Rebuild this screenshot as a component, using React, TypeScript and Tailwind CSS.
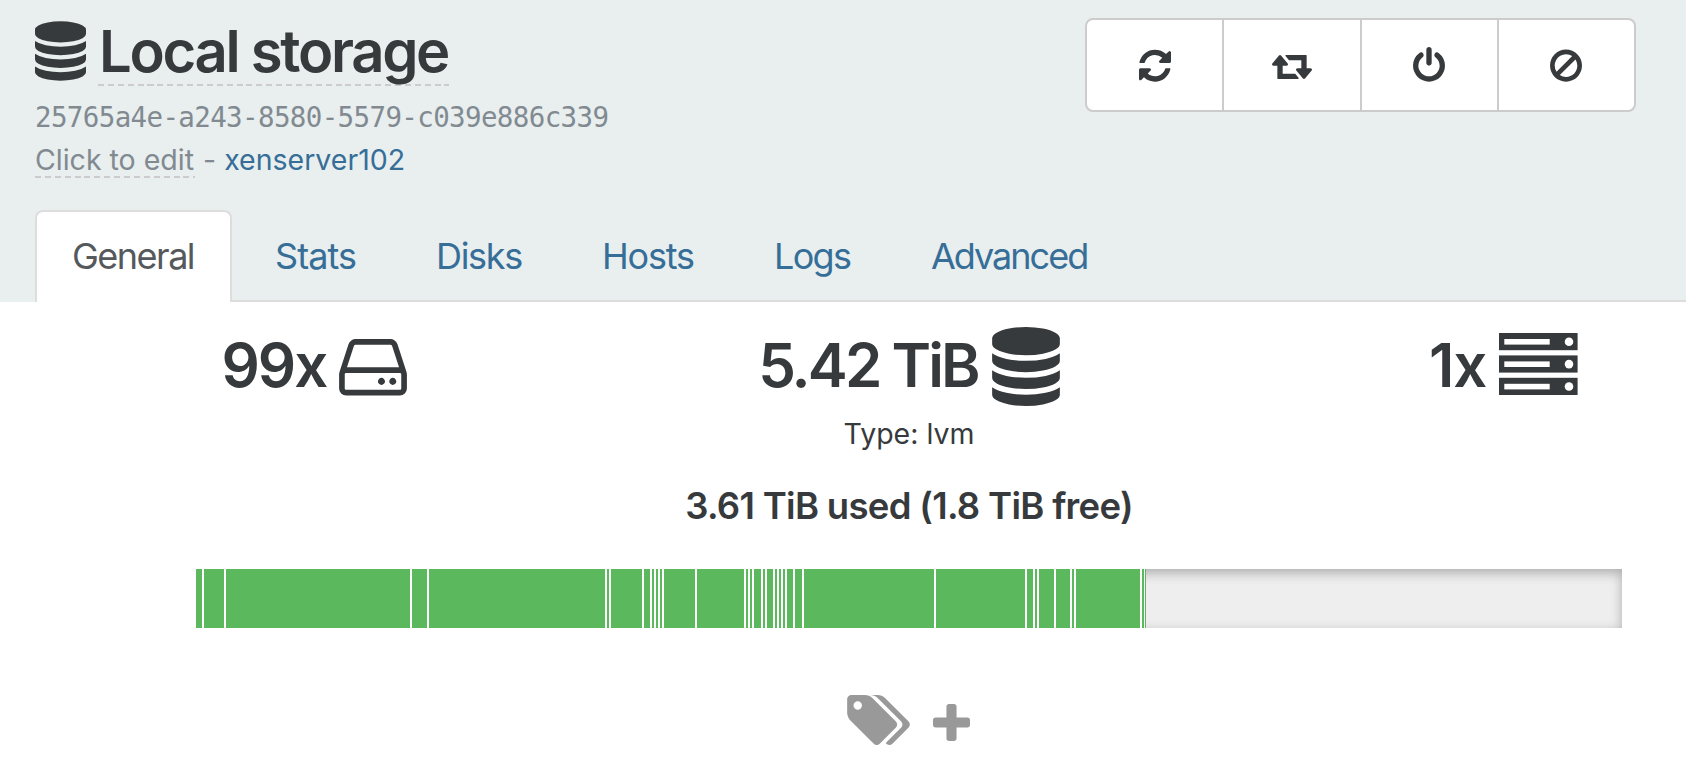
import type { ReactNode } from 'react';

interface IconProps {
  className?: string;
}

function DatabaseIcon({ className }: IconProps) {
  return (
    <svg viewBox="0 0 1536 1792" fill="currentColor" className={className}>
      <path d="M768 768q237 0 443-43t325-127v170q0 69-103 128t-280 93.5-385 34.5-385-34.5-280-93.5-103-128v-170q119 84 325 127t443 43zm0 768q237 0 443-43t325-127v170q0 69-103 128t-280 93.5-385 34.5-385-34.5-280-93.5-103-128v-170q119 84 325 127t443 43zm0-384q237 0 443-43t325-127v170q0 69-103 128t-280 93.5-385 34.5-385-34.5-280-93.5-103-128v-170q119 84 325 127t443 43zm0-1152q208 0 385 34.5t280 93.5 103 128v128q0 69-103 128t-280 93.5-385 34.5-385-34.5-280-93.5-103-128v-128q0-69 103-128t280-93.5 385-34.5z" />
    </svg>
  );
}

function RefreshIcon({ className }: IconProps) {
  return (
    <svg viewBox="128 0 1536 1792" fill="currentColor" className={className}>
      <path d="M1639 1056q0 5-1 7-64 268-268 434.5t-478 166.5q-146 0-282.5-55t-243.5-157l-129 129q-19 19-45 19t-45-19-19-45v-448q0-26 19-45t45-19h448q26 0 45 19t19 45-19 45l-137 137q71 66 161 102t187 36q134 0 250-65t186-179q11-17 53-117 8-23 30-23h192q13 0 22.5 9.5t9.5 22.5zm25-800v448q0 26-19 45t-45 19h-448q-26 0-45-19t-19-45 19-45l138-138q-148-137-349-137-134 0-250 65t-186 179q-11 17-53 117-8 23-30 23h-199q-13 0-22.5-9.5t-9.5-22.5v-7q65-268 270-434.5t480-166.5q146 0 284 55.5t245 156.5l130-129q19-19 45-19t45 19 19 45z" />
    </svg>
  );
}

function RetweetIcon({ className }: IconProps) {
  return (
    <svg viewBox="-64 64 1920 1792" fill="currentColor" className={className}>
      <path d="M1216 1568q0 13-9.5 22.5t-22.5 9.5h-960q-8 0-13.5-2t-9-7-5.5-8-3-11.5-1-11.5v-600h-192q-26 0-45-19t-19-45q0-24 15-41l320-384q19-22 49-22t49 22l320 384q15 17 15 41 0 26-19 45t-45 19h-192v384h576q16 0 25 11l160 192q7 10 7 21zm640-416q0 24-15 41l-320 384q-20 23-49 23t-49-23l-320-384q-15-17-15-41 0-26 19-45t45-19h192v-384h-576q-16 0-25-12l-160-192q-7-9-7-20 0-13 9.5-22.5t22.5-9.5h960q8 0 13.5 2t9 7 5.5 8 3 11.5 1 11.5v600h192q26 0 45 19t19 45z" />
    </svg>
  );
}

function PowerIcon({ className }: IconProps) {
  return (
    <svg viewBox="128 0 1536 1792" fill="currentColor" className={className}>
      <path d="M1664 896q0 156-61 298t-164 245-245 164-298 61-298-61-245-164-164-245-61-298q0-182 80.5-343t226.5-270q43-32 95.5-25t83.5 50q32 42 24.5 94.5t-49.5 84.5q-98 74-151.5 181t-53.5 228q0 104 40.5 198.5t109.5 163.5 163.5 109.5 198.5 40.5 198.5-40.5 163.5-109.5 109.5-163.5 40.5-198.5q0-121-53.5-228t-151.5-181q-42-32-49.5-84.5t24.5-94.5q31-43 84-50t95 25q146 109 226.5 270t80.5 343zm-640-768v640q0 52-38 90t-90 38-90-38-38-90v-640q0-52 38-90t90-38 90 38 38 90z" />
    </svg>
  );
}

function BanIcon({ className }: IconProps) {
  return (
    <svg viewBox="128 0 1536 1792" fill="currentColor" className={className}>
      <path d="M1440 893q0-161-87-295l-754 753q137 89 297 89 111 0 211.5-43.5t173.5-116.5 116-174.5 43-212.5zm-999 299l755-754q-135-91-300-91-148 0-273 73t-198 199-73 274q0 162 89 299zm1223-299q0 157-61 300t-163.5 246-245 164-298.5 61-298.5-61-245-164-163.5-246-61-300 61-299.5 163.5-245.5 245-164 298.5-61 298.5 61 245 164 163.5 245.5 61 299.5z" />
    </svg>
  );
}

function HddIcon({ className }: IconProps) {
  return (
    <svg viewBox="128 256 1536 1280" fill="currentColor" className={className}>
      <path d="M1168 1216q0 33-23.5 56.5t-56.5 23.5-56.5-23.5-23.5-56.5 23.5-56.5 56.5-23.5 56.5 23.5 23.5 56.5zm256 0q0 33-23.5 56.5t-56.5 23.5-56.5-23.5-23.5-56.5 23.5-56.5 56.5-23.5 56.5 23.5 23.5 56.5zm112 160v-320q0-13-9.5-22.5t-22.5-9.5h-1216q-13 0-22.5 9.5t-9.5 22.5v320q0 13 9.5 22.5t22.5 9.5h1216q13 0 22.5-9.5t9.5-22.5zm-1230-480h1180l-157-482q-4-13-16-21.5t-26-8.5h-782q-14 0-26 8.5t-16 21.5zm1358 160v320q0 66-47 113t-113 47h-1216q-66 0-113-47t-47-113v-320q0-25 16-75l197-606q17-53 63-86t101-33h782q55 0 101 33t63 86l197 606q16 50 16 75z" />
    </svg>
  );
}

function HostIcon({ className }: IconProps) {
  return (
    <svg viewBox="0 0 79 62" className={className}>
      {[0, 22.4, 44.8].map((y) => (
        <g key={y}>
          <rect x="0" y={y} width="78.6" height="17.2" fill="currentColor" />
          <rect x="5.3" y={y + 6} width="45.4" height="5.6" fill="#fff" />
          <circle cx="70" cy={y + 8.7} r="4.3" fill="#fff" />
        </g>
      ))}
    </svg>
  );
}

function TagsIcon({ className }: IconProps) {
  return (
    <svg viewBox="0 128 1899 1515" fill="currentColor" className={className}>
      <path d="M448 448q0-53-37.5-90.5t-90.5-37.5-90.5 37.5-37.5 90.5 37.5 90.5 90.5 37.5 90.5-37.5 37.5-90.5zm1067 576q0 53-37 90l-491 492q-39 37-91 37-53 0-90-37l-715-716q-38-37-64.5-101t-26.5-117v-416q0-52 38-90t90-38h416q53 0 117 26.5t102 64.5l715 714q37 39 37 91zm384 0q0 53-37 90l-491 492q-39 37-91 37-36 0-59-14t-53-45l470-470q37-37 37-90 0-52-37-91l-715-714q-38-38-102-64.5t-117-26.5h224q53 0 117 26.5t102 64.5l715 714q37 39 37 91z" />
    </svg>
  );
}

function PlusIcon({ className }: IconProps) {
  return (
    <svg viewBox="192 128 1408 1408" fill="currentColor" className={className}>
      <path d="M1600 736v192q0 40-28 68t-68 28h-416v416q0 40-28 68t-68 28h-192q-40 0-68-28t-28-68v-416h-416q-40 0-68-28t-28-68v-192q0-40 28-68t68-28h416v-416q0-40 28-68t68-28h192q40 0 68 28t28 68v416h416q40 0 68 28t28 68z" />
    </svg>
  );
}

// Disk sizes on the usage bar, in pixels
const DISKS = [
  8, 22, 186, 17, 178, 4, 33, 8, 4, 4, 4, 33, 49, 4, 4, 9, 4, 8, 4, 4, 4, 8, 9, 132, 91, 8, 4, 17, 16, 4, 66,
];

const TABS = [
  { name: 'Stats', className: 'ml-[43px] w-[81px] tracking-[-0.9px]' },
  { name: 'Disks', className: 'ml-[80px] w-[86px] tracking-[-1.3px]' },
  { name: 'Hosts', className: 'ml-[80px] w-[93px] tracking-[-1.2px]' },
  { name: 'Logs', className: 'ml-[79px] w-[77px] tracking-[-1.7px]' },
  { name: 'Advanced', className: 'ml-[80px] tracking-[-2px]' },
];

function Dashes({ className }: IconProps) {
  return (
    <span
      className={`block h-0.5 bg-[repeating-linear-gradient(90deg,#ccc_0_6px,transparent_6px_9.9px)] ${className ?? ''}`}
    />
  );
}

function ActionButton({ children }: { children: ReactNode }) {
  return (
    <button className="flex flex-1 items-center justify-center border-r-2 border-[#ccc] pt-px last:border-r-0">
      {children}
    </button>
  );
}

function Header() {
  return (
    <header className="flex h-[302px] flex-col bg-[#e9eeee]">
      <div className="flex h-[210px] justify-between pr-[50px] pl-[35px]">
        <div className="pt-[19px]">
          <div className="flex">
            <DatabaseIcon className="mt-0.5 h-[60px] w-[51px]" />
            <div className="ml-3">
              <h1 className="h-[65px] w-[351px] pl-px text-[58px] leading-[65px] font-semibold tracking-[-2.3px] whitespace-nowrap">
                Local storage
              </h1>
              <Dashes />
            </div>
          </div>
          <p className="mt-[11px] h-10 font-['DejaVu_Sans_Mono',monospace] text-[27.5px] leading-10 tracking-[-0.63px] text-[#818a91]">
            25765a4e-a243-8580-5579-c039e886c339
          </p>
          <div className="mt-[5px] flex h-9 text-[28.5px] leading-9 whitespace-pre text-[#818a91]">
            <div className="w-40">
              <span className="block h-[34px]">Click to edit</span>
              <Dashes />
            </div>
            <span> - </span>
            <a className="text-[#366e98]">xenserver102</a>
          </div>
        </div>
        <div className="mt-[18px] flex h-[94px] w-[551px] rounded-lg border-2 border-[#ccc] bg-white">
          <ActionButton>
            <RefreshIcon className="h-[37.3px] w-8" />
          </ActionButton>
          <ActionButton>
            <RetweetIcon className="h-[37.3px] w-10" />
          </ActionButton>
          <ActionButton>
            <PowerIcon className="h-[37.3px] w-8" />
          </ActionButton>
          <ActionButton>
            <BanIcon className="h-[37.3px] w-8" />
          </ActionButton>
        </div>
      </div>
      <nav className="flex h-[92px] pl-[35px] text-[36px] leading-[60px]">
        <a className="w-[197px] rounded-t-lg border-2 border-b-0 border-[#ddd] bg-white pt-3.5 pl-[35px] tracking-[-1.5px] text-[#55595c]">
          General
        </a>
        <div className="flex flex-1 border-b-2 border-[#ddd] pt-4 text-[#366e98]">
          {TABS.map((tab) => (
            <a key={tab.name} className={tab.className}>
              {tab.name}
            </a>
          ))}
        </div>
      </nav>
    </header>
  );
}

function UsageBar() {
  return (
    <div className="mt-[38px] ml-[196px] flex h-[59px] w-[1426px] bg-[#eee] shadow-[inset_0_4px_12px_rgba(0,0,0,0.28)]">
      {DISKS.map((width, i) => (
        <div key={i} className="shrink-0 border-r-2 border-white bg-[#5cb85c]" style={{ width }} />
      ))}
      <div className="w-[3px] border-r border-white bg-[#5cb85c]" />
      <div className="w-px bg-[#5cb85c]" />
    </div>
  );
}

export default function App() {
  return (
    <div className="h-[782px] w-full overflow-hidden bg-white font-[Inter,sans-serif] text-[#373a3c]">
      <Header />
      <div className="ml-[17px] grid h-[106px] w-[1784px] grid-cols-3 text-[60px] leading-[84px] font-semibold">
        <div className="flex justify-center pt-[21px]">
          <span className="tracking-[-2px]">99x</span>
          <HddIcon className="mt-4 ml-[13px] h-[56.5px] w-[68px]" />
        </div>
        <div className="flex justify-center pt-[21px]">
          <span className="tracking-[-2.9px]">5.42 TiB</span>
          <DatabaseIcon className="mt-1 ml-3.5 h-[79px] w-[68px]" />
        </div>
        <div className="flex justify-center pt-[21px]">
          <span className="tracking-[-1px]">1x</span>
          <HostIcon className="mt-2.5 ml-[13px] h-[62px] w-[79px]" />
        </div>
      </div>
      <div className="ml-[17px] w-[1784px] text-center">
        <p className="pt-[7px] text-[28.5px] leading-[38px]">Type: lvm</p>
        <p className="mt-7 text-[36.5px] leading-[50px] font-semibold tracking-[-0.7px]">
          3.61 TiB used (1.8 TiB free)
        </p>
      </div>
      <UsageBar />
      <div className="mt-[66px] ml-[847px] flex text-[#999]">
        <TagsIcon className="mt-px h-[50px] w-[63px]" />
        <PlusIcon className="mt-2.5 ml-[23px] h-[37px] w-[37px]" />
      </div>
    </div>
  );
}
